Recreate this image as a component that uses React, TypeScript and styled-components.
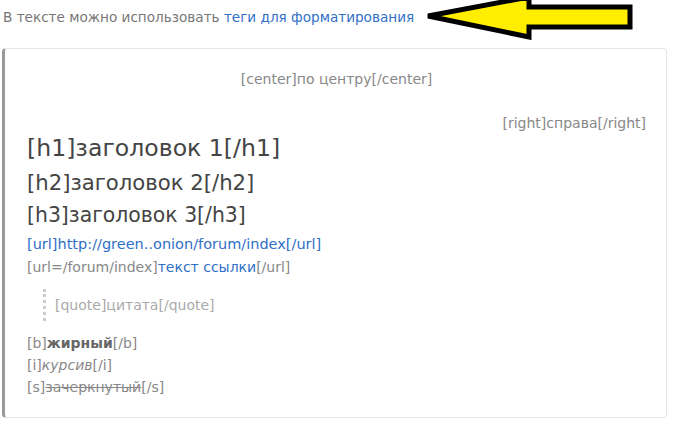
import React from "react";
import styled, { createGlobalStyle } from "styled-components";

const GlobalStyle = createGlobalStyle`
  html, body {
    margin: 0;
    padding: 0;
    background: #fff;
  }
  body {
    font-family: "DejaVu Sans", Verdana, sans-serif;
    font-size: 14px;
    color: #777;
  }
`;

const Page = styled.div`
  width: 681px;
  height: 431px;
  overflow: hidden;
`;

const Hint = styled.div`
  display: flex;
  align-items: center;
  height: 46px;
  padding-left: 3px;
  margin-top: -6px;
  margin-bottom: 8px;
  font-size: 13.6px;
  color: #777;
`;

const Link = styled.a<{ $size?: number }>`
  color: #2f6fc7;
  text-decoration: none;
  ${(p) => (p.$size ? `font-size: ${p.$size}px;` : "")}
`;

const ArrowIcon = styled.svg`
  margin-left: 11px;
  flex-shrink: 0;
`;

const Box = styled.div`
  margin-left: 2px;
  width: 665px;
  box-sizing: border-box;
  border: 1px solid #e6e6e6;
  border-left: 3px solid #999;
  border-radius: 4px;
  padding: 20px 20px 19px 22px;
`;

const Line = styled.div<{ $align?: "left" | "center" | "right"; $top?: number; $lh?: number }>`
  text-align: ${(p) => p.$align || "left"};
  margin-top: ${(p) => p.$top || 0}px;
  line-height: ${(p) => p.$lh || 22}px;
  color: #888;
  white-space: nowrap;
`;

const Heading = styled.div<{ $size: number; $lh: number; $top?: number }>`
  font-size: ${(p) => p.$size}px;
  line-height: ${(p) => p.$lh}px;
  margin-top: ${(p) => p.$top || 0}px;
  color: #444;
  white-space: nowrap;
`;

const Quote = styled.div`
  margin: 10px 0 11px 16px;
  border-left: 3px dotted #ccc;
  padding-left: 9px;
  line-height: 32px;
  color: #aaa;
`;

const Bold = styled.b`
  color: #666;
`;

const Italic = styled.i``;

const Strike = styled.s``;

const Arrow = () => (
  <ArrowIcon width="210" height="46" viewBox="0 0 210 46">
    <polygon
      points="3,22 104,3 104,13 205,13 205,33 104,33 104,43"
      fill="#ffee00"
      stroke="#000"
      strokeWidth="5"
      strokeLinejoin="miter"
    />
  </ArrowIcon>
);

const App: React.FC = () => {
  return (
    <Page>
      <GlobalStyle />
      <Hint>
        <span>
          В тексте можно использовать <Link href="#">теги для форматирования</Link>
        </span>
        <Arrow />
      </Hint>
      <Box>
        <Line $align="center" $lh={20}>[center]по центру[/center]</Line>
        <Line $align="right" $lh={20} $top={24}>[right]справа[/right]</Line>
        <Heading $size={23.6} $lh={30}>[h1]заголовок 1[/h1]</Heading>
        <Heading $size={21.2} $lh={34} $top={3}>[h2]заголовок 2[/h2]</Heading>
        <Heading $size={20.4} $lh={30}>[h3]заголовок 3[/h3]</Heading>
        <Line $lh={23} $top={3}>
          <Link href="#" $size={14.5}>[url]http://green..onion/forum/index[/url]</Link>
        </Line>
        <Line $lh={23}>
          [url=/forum/index]<Link href="#">текст ссылки</Link>[/url]
        </Line>
        <Quote>[quote]цитата[/quote]</Quote>
        <Line>
          [b]<Bold>жирный</Bold>[/b]
        </Line>
        <Line>
          [i]<Italic>курсив</Italic>[/i]
        </Line>
        <Line>
          [s]<Strike>зачеркнутый</Strike>[/s]
        </Line>
      </Box>
    </Page>
  );
};

export default App;
